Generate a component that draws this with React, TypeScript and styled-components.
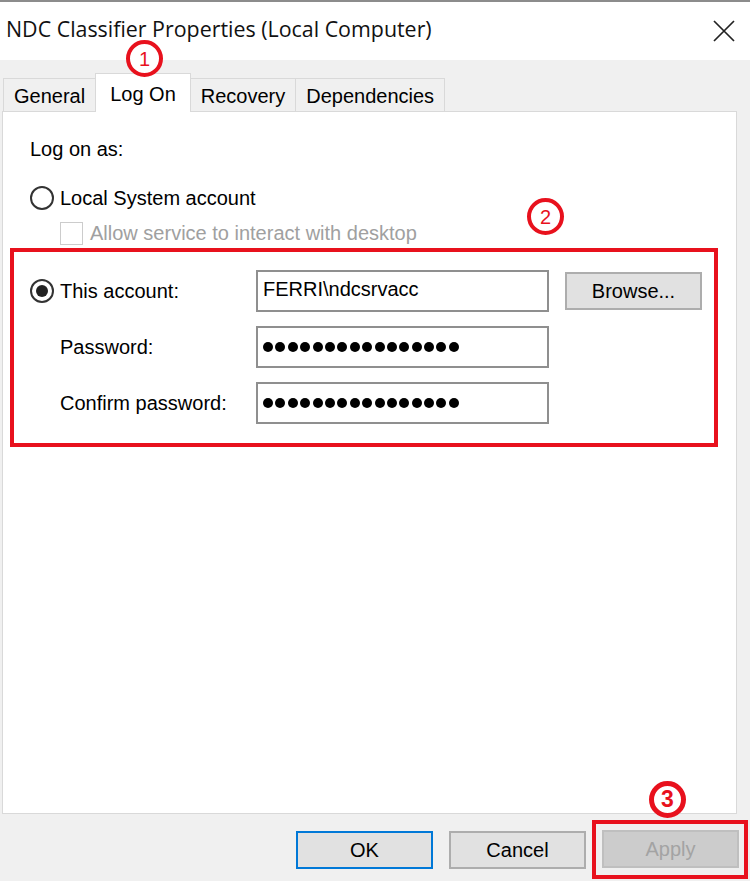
import React from "react";
import styled, { createGlobalStyle } from "styled-components";

const RED = "#e8111d";

const GlobalStyle = createGlobalStyle`
  html, body { margin: 0; padding: 0; background: #f0f0f0; }
  body { font-family: "Liberation Sans", Arial, sans-serif; }
  * { box-sizing: border-box; }
`;

const Dialog = styled.div`
  position: relative;
  width: 750px;
  height: 881px;
  display: flex;
  flex-direction: column;
  background: #f0f0f0;
  overflow: hidden;
  color: #000;
  font-family: "Liberation Sans", Arial, sans-serif;
  font-size: 20px;
  line-height: 24px;
`;

const TitleBar = styled.div`
  flex: none;
  height: 60px;
  display: flex;
  align-items: flex-start;
  justify-content: space-between;
  background: #fff;
  border-top: 2px solid #8c8c8c;
  padding: 13px 15px 0 6px;
`;

const Title = styled.div`
  font-family: "Open Sans", "Noto Sans", sans-serif;
  font-size: 21.4px;
  line-height: 28px;
  color: #111;
  white-space: nowrap;
`;

const CloseIcon = styled.svg`
  width: 22px;
  height: 22px;
  margin-top: 5px;
  flex: none;
`;

const TabStrip = styled.div`
  flex: none;
  display: flex;
  align-items: flex-end;
  margin-top: 13px;
  padding-left: 3px;
`;

const Tab = styled.div<{ $active?: boolean }>`
  position: relative;
  z-index: ${(p) => (p.$active ? 1 : 0)};
  height: ${(p) => (p.$active ? "39px" : "33px")};
  margin-bottom: ${(p) => (p.$active ? "-1px" : "0")};
  margin-left: -1px;
  padding: ${(p) => (p.$active ? "8px 14px 0" : "5px 10px 0 10px")};
  border: 1px solid #d9d9d9;
  border-bottom: none;
  background: ${(p) => (p.$active ? "#fff" : "#f0f0f0")};
  white-space: nowrap;
  &:first-child { margin-left: 0; }
`;

const Panel = styled.div`
  flex: 1;
  width: 735px;
  margin-left: 2px;
  background: #fff;
  border: 1px solid #d9d9d9;
  padding: 25px 0 0 7px;
  display: flex;
  flex-direction: column;
`;

const TopSection = styled.div`
  display: flex;
  flex-direction: column;
  padding-left: 20px;
`;

const Caption = styled.div`
  height: 24px;
`;

const OptionRow = styled.div<{ $indent?: number; $top: number }>`
  display: flex;
  align-items: center;
  height: 24px;
  margin-top: ${(p) => p.$top}px;
  padding-left: ${(p) => p.$indent ?? 0}px;
`;

const Radio = styled.span<{ $checked?: boolean }>`
  flex: none;
  width: 24px;
  height: 24px;
  border-radius: 50%;
  border: 2px solid #333;
  background: #fff;
  margin-right: 6px;
  display: flex;
  align-items: center;
  justify-content: center;
  &::after {
    content: "";
    display: ${(p) => (p.$checked ? "block" : "none")};
    width: 12px;
    height: 12px;
    border-radius: 50%;
    background: #222;
  }
`;

const Checkbox = styled.span`
  flex: none;
  width: 23px;
  height: 23px;
  border: 1px solid #cccccc;
  background: #fff;
  margin-right: 7px;
`;

const MutedText = styled.span`
  color: #a0a0a0;
`;

const AccountGroup = styled.div`
  margin-top: 3px;
  width: 708px;
  border: 4px solid ${RED};
  padding: 18px 0 19px 16px;
  display: grid;
  grid-template-columns: 226px 293px auto;
  grid-auto-rows: 42px;
  row-gap: 14px;
  align-items: center;
`;

const FieldLabel = styled.div<{ $indent?: boolean }>`
  display: flex;
  align-items: center;
  padding-left: ${(p) => (p.$indent ? "30px" : "0")};
`;

const TextBox = styled.div`
  height: 42px;
  border: 2px solid #8f8f8f;
  background: #fff;
  display: flex;
  align-items: center;
  padding: 0 0 4px 5px;
  white-space: nowrap;
`;

const Dots = styled.div`
  display: flex;
  gap: 2.4px;
  padding-top: 3px;
`;

const Dot = styled.span`
  width: 10px;
  height: 10px;
  border-radius: 50%;
  background: #000;
`;

const Button = styled.button<{ $variant?: "default" | "primary" | "disabled" }>`
  width: 137px;
  height: 38px;
  padding: 0;
  font-family: "Liberation Sans", Arial, sans-serif;
  font-size: 20px;
  line-height: 24px;
  color: ${(p) => (p.$variant === "disabled" ? "#a3a3a3" : "#000")};
  background: ${(p) => (p.$variant === "disabled" ? "#cccccc" : "#e1e1e1")};
  border: 2px solid
    ${(p) =>
      p.$variant === "primary" ? "#0078d7" : p.$variant === "disabled" ? "#bfbfbf" : "#adadad"};
  border-radius: 0;
  cursor: default;
`;

const SideButton = styled(Button)`
  margin-left: 16px;
`;

const Footer = styled.div`
  flex: none;
  height: 67px;
  display: flex;
  align-items: center;
  justify-content: flex-end;
  gap: 16px;
  padding: 6px 2px 2px 0;
`;

const Highlight = styled.div`
  margin-left: -10px;
  border: 4px solid ${RED};
  padding: 6px 5px 7px 6px;
  display: flex;
`;

const Marker = styled.div<{ $x: number; $y: number; $bold?: boolean }>`
  position: absolute;
  left: ${(p) => p.$x}px;
  top: ${(p) => p.$y}px;
  z-index: 5;
  width: 37px;
  height: 37px;
  border-radius: 50%;
  border: ${(p) => (p.$bold ? 5 : 4)}px solid ${RED};
  background: #fff;
  color: ${RED};
  font-family: "Liberation Sans", Arial, sans-serif;
  font-size: ${(p) => (p.$bold ? 23 : 20)}px;
  font-weight: ${(p) => (p.$bold ? 700 : 400)};
  line-height: 1;
  display: flex;
  align-items: center;
  justify-content: center;
`;

const PasswordDots: React.FC<{ count: number }> = ({ count }) => (
  <Dots>
    {Array.from({ length: count }, (_, i) => (
      <Dot key={i} />
    ))}
  </Dots>
);

export default function App() {
  return (
    <>
      <GlobalStyle />
      <Dialog>
        <TitleBar>
          <Title>NDC Classifier Properties (Local Computer)</Title>
          <CloseIcon viewBox="0 0 22 22">
            <path d="M1 1 L21 21 M21 1 L1 21" stroke="#222" strokeWidth="1.7" fill="none" />
          </CloseIcon>
        </TitleBar>

        <TabStrip>
          <Tab>General</Tab>
          <Tab $active>Log On</Tab>
          <Tab>Recovery</Tab>
          <Tab>Dependencies</Tab>
        </TabStrip>

        <Panel>
          <TopSection>
            <Caption>Log on as:</Caption>
            <OptionRow $top={25}>
              <Radio />
              Local System account
            </OptionRow>
            <OptionRow $top={11} $indent={30}>
              <Checkbox />
              <MutedText>Allow service to interact with desktop</MutedText>
            </OptionRow>
          </TopSection>

          <AccountGroup>
            <FieldLabel>
              <Radio $checked />
              This account:
            </FieldLabel>
            <TextBox>FERRI\ndcsrvacc</TextBox>
            <SideButton>Browse...</SideButton>

            <FieldLabel $indent>Password:</FieldLabel>
            <TextBox>
              <PasswordDots count={16} />
            </TextBox>
            <span />

            <FieldLabel $indent>Confirm password:</FieldLabel>
            <TextBox>
              <PasswordDots count={16} />
            </TextBox>
            <span />
          </AccountGroup>
        </Panel>

        <Footer>
          <Button $variant="primary">OK</Button>
          <Button>Cancel</Button>
          <Highlight>
            <Button $variant="disabled">Apply</Button>
          </Highlight>
        </Footer>

        <Marker $x={126} $y={40}>1</Marker>
        <Marker $x={527} $y={198}>2</Marker>
        <Marker $x={649} $y={781} $bold>3</Marker>
      </Dialog>
    </>
  );
}
